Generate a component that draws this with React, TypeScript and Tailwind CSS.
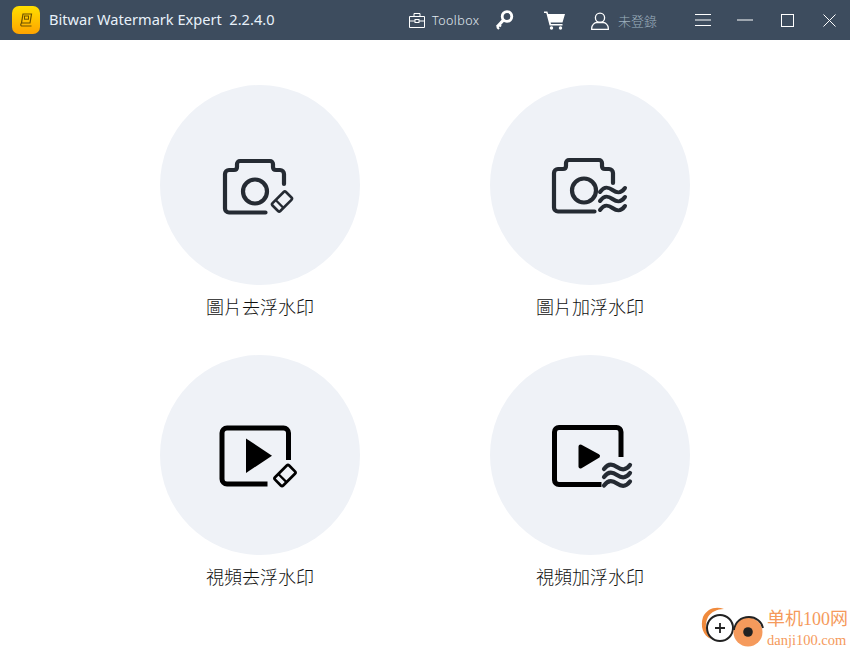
function Eraser({ cx, cy, s = 1 }: { cx: number; cy: number; s?: number }) {
  return (
    <g transform={`translate(${cx} ${cy}) rotate(-45) scale(${s})`}>
      <rect x="-9.5" y="-5.5" width="19" height="11" rx="1.6" fill="none" stroke="currentColor" strokeWidth="2.6" />
      <line x1="-3.5" y1="-5.5" x2="-3.5" y2="5.5" stroke="currentColor" strokeWidth="2.2" />
    </g>
  );
}

function Waves({ x, ys, w, sw }: { x: number; ys: number[]; w: number; sw: number }) {
  return (
    <g fill="none" stroke="currentColor" strokeWidth={sw} strokeLinecap="round">
      {ys.map((y) => (
        <path key={y} d={`M${x} ${y + 2} c${w * 0.17} -${6} ${w * 0.33} -${5} ${w * 0.5} -${2} s${w * 0.33} ${4} ${w * 0.5} -${2}`} />
      ))}
    </g>
  );
}

function CameraErase() {
  return (
    <svg width="100" height="80" viewBox="0 0 100 80" className="text-[#252b33]">
      <path d="M55.5 67.5H19a4 4 0 0 1-4-4V29a4 4 0 0 1 4-4h5q3 0 3-3v-3a3 3 0 0 1 3-3h30a3 3 0 0 1 3 3v3q0 3 3 3h4a4 4 0 0 1 4 4v10" fill="none" stroke="currentColor" strokeWidth="4.2" strokeLinecap="round" />
      <circle cx="45" cy="46.5" r="12" fill="none" stroke="currentColor" strokeWidth="4.2" />
      <Eraser cx={72} cy={56.5} />
    </svg>
  );
}

function CameraWave() {
  return (
    <svg width="100" height="80" viewBox="0 0 100 80" className="text-[#252b33]">
      <path d="M54.5 66.5H18a4 4 0 0 1-4-4V28a4 4 0 0 1 4-4h5q3 0 3-3v-3a3 3 0 0 1 3-3h30a3 3 0 0 1 3 3v3q0 3 3 3h4a4 4 0 0 1 4 4v10" fill="none" stroke="currentColor" strokeWidth="4.2" strokeLinecap="round" />
      <circle cx="44" cy="45.5" r="12" fill="none" stroke="currentColor" strokeWidth="4.2" />
      <Waves x={60} ys={[45, 54, 63]} w={25} sw={4} />
    </svg>
  );
}

function VideoErase() {
  return (
    <svg width="100" height="80" viewBox="0 0 100 80" className="text-black">
      <path d="M57.5 69H17a5 5 0 0 1-5-5V18a5 5 0 0 1 5-5h56.5a5 5 0 0 1 5 5v27" fill="none" stroke="currentColor" strokeWidth="5" strokeLinecap="butt" />
      <path d="M36 23.5 62 40.7 36 58Z" fill="currentColor" />
      <Eraser cx={75} cy={60.5} s={1.05} />
    </svg>
  );
}

function VideoWave() {
  return (
    <svg width="100" height="80" viewBox="0 0 100 80" className="text-black">
      <path d="M61.5 69.5H19a4.5 4.5 0 0 1-4.5-4.5V17a4.5 4.5 0 0 1 4.5-4.5h57.5A4.5 4.5 0 0 1 81 17v25" fill="none" stroke="currentColor" strokeWidth="5" />
      <path d="M40.5 31.5 58 41 40.5 51.5Z" fill="currentColor" stroke="currentColor" strokeWidth="4" strokeLinejoin="round" />
      <g className="text-[#252b33]">
        <Waves x={64} ys={[52, 60, 68.5]} w={26} sw={4.2} />
      </g>
    </svg>
  );
}

function Card({ label, children }: { label: string; children: React.ReactNode }) {
  return (
    <div className="flex flex-col items-center">
      <div className="w-[200px] h-[200px] rounded-full bg-[#eff2f7] flex items-center justify-center">{children}</div>
      <div className="mt-[9px] h-[26px] leading-[26px] text-[18px] font-light text-[#111111]">{label}</div>
    </div>
  );
}

export default function App() {
  return (
    <div
      className="relative w-[850px] h-[650px] bg-white overflow-hidden"
      style={{ fontFamily: '"Noto Sans", "Noto Sans CJK TC", sans-serif' }}
    >
      <header className="h-10 bg-[#3d4c5e] flex items-center text-white">
        <svg width="28" height="28" viewBox="0 0 28 28" className="ml-3">
          <defs>
            <linearGradient id="lg" x1="0" y1="0" x2="0" y2="1">
              <stop offset="0" stopColor="#ffdf00" />
              <stop offset="1" stopColor="#ffa300" />
            </linearGradient>
          </defs>
          <rect width="28" height="28" rx="7" fill="url(#lg)" />
          <path d="M11 8h8.5l-1.5 9H9.5ZM9.5 17q-1.5 2 0 3h10" fill="none" stroke="#6a5000" strokeWidth="1.2" />
          <rect x="12.5" y="10" width="4" height="3.2" fill="none" stroke="#6a5000" strokeWidth="1" />
        </svg>
        <span className="ml-[9px] w-[226px] text-[14.6px] text-[#e8f1fa] whitespace-pre">Bitwar Watermark Expert  2.2.4.0</span>

        <svg width="16" height="16" viewBox="0 0 16 16" className="ml-[134px]" fill="none" stroke="white" strokeWidth="1">
          <path d="M.5 4.5h15v11H.5zM5 4.5v-3h6v3M.5 9h15" />
          <rect x="6" y="7.5" width="4" height="3" fill="#3d4c5e" />
        </svg>
        <span className="ml-[7px] w-[50px] h-[18px] leading-[20px] text-[12.5px] font-light tracking-[0.45px] text-[#e3ebf2]">Toolbox</span>

        <svg width="20" height="22" viewBox="0 0 20 22" className="ml-[12px]" fill="none" stroke="white">
          <circle cx="13" cy="7.5" r="4.8" strokeWidth="2.8" />
          <path d="M9.5 11 3 18" strokeWidth="3.2" />
          <path d="M3 18l2 2M5 15.5l2 2" strokeWidth="2" />
        </svg>

        <svg width="21" height="20" viewBox="0 0 21 20" className="ml-[30px]" fill="white">
          <path d="M0 1.5h3.4l.8 2.5H21l-2.5 8.5H6.6l.4 1.5h11.5v1.6H5.6L2.3 3H0Z" />
          <circle cx="7.5" cy="18" r="1.7" />
          <circle cx="16.5" cy="18" r="1.7" />
        </svg>

        <svg width="18" height="18" viewBox="0 0 18 18" className="ml-[26px] mt-[2px]" fill="none" stroke="white" strokeWidth="1.3">
          <circle cx="9" cy="5.7" r="4.6" />
          <path d="M.7 17.3v-1.2c0-3.2 3-5.6 5-5.6h6.6c2 0 5 2.4 5 5.6v1.2Z" />
        </svg>
        <span className="ml-[9px] w-[40px] h-[18px] leading-[20px] text-[13px] font-light text-[#9db0bf] whitespace-nowrap">未登錄</span>

        <svg width="16" height="12" viewBox="0 0 16 12" className="ml-[37px]" stroke="white" strokeWidth="1">
          <path d="M0 .5h16M0 6h16M0 11.5h16" />
        </svg>
        <svg width="16" height="2" viewBox="0 0 16 2" className="ml-[26px]" stroke="white" strokeWidth="1">
          <path d="M0 1h16" />
        </svg>
        <svg width="13" height="13" viewBox="0 0 13 13" className="ml-[28px]" fill="none" stroke="white" strokeWidth="1">
          <rect x=".5" y=".5" width="12" height="12" />
        </svg>
        <svg width="13" height="13" viewBox="0 0 13 13" className="ml-[29px]" stroke="white" strokeWidth="1">
          <path d="M.5.5l12 12M12.5.5l-12 12" />
        </svg>
      </header>

      <main className="grid grid-cols-[200px_200px] justify-center gap-x-[130px] pt-[45px] gap-y-[35px]">
        <Card label="圖片去浮水印"><CameraErase /></Card>
        <Card label="圖片加浮水印"><CameraWave /></Card>
        <Card label="視頻去浮水印"><VideoErase /></Card>
        <Card label="視頻加浮水印"><VideoWave /></Card>
      </main>

      <div className="absolute left-[700px] top-[604px] w-[150px] h-[46px] flex items-center">
        <svg width="66" height="46" viewBox="0 0 66 46">
          <path d="M3 13C7 5 15 2 24 5c-7 0-13 3-16 8-4 8-2 16 3 22C3 32 0 22 3 13Z" fill="#f08a3c" />
          <circle cx="20" cy="24" r="13" fill="white" stroke="#222" strokeWidth="2" />
          <path d="M15 24h10M20 19v10" stroke="#222" strokeWidth="1.8" />
          <circle cx="48" cy="28" r="14.5" fill="#f59a5c" />
          <path d="M34 26c1-8 7-13 15-13 7 0 13 5 14 11" fill="none" stroke="#222" strokeWidth="1.8" />
          <circle cx="48" cy="28" r="4.8" fill="#222" />
        </svg>
        <div className="flex flex-col items-start text-[#f59a5c] ml-[1px]" style={{ fontFamily: '"Liberation Serif", "Noto Sans CJK SC", serif' }}>
          <span className="text-[18px] leading-[26px] whitespace-nowrap">单机100网</span>
          <span className="text-[14.5px] leading-[16px] whitespace-nowrap">danji100.com</span>
        </div>
      </div>
    </div>
  );
}
